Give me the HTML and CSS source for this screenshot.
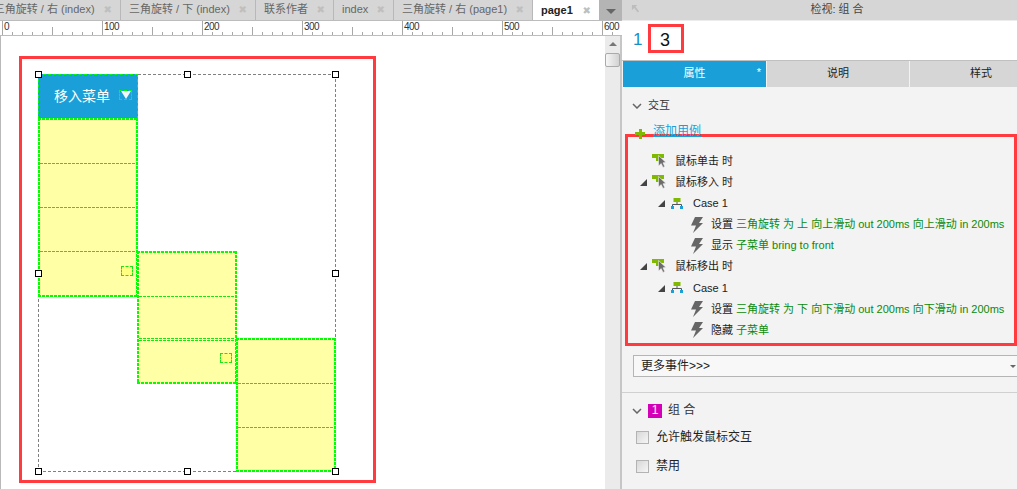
FILE: index.html
```html
<!DOCTYPE html>
<html lang="zh">
<head>
<meta charset="utf-8">
<title>page1</title>
<link rel="stylesheet" href="styles.css">
</head>
<body>
<svg class="defs" aria-hidden="true">
  <symbol id="ev" viewBox="0 0 16 14">
    <path d="M0 0h12v4H8v3H4V4H0z" fill="#7fba00"/>
    <path d="M6.500 1.500l7.500 7-3 .3 1.800 3.700-1.800.9-1.800-3.800-2.700 2.400z" fill="#6d6d6d" stroke="#f3f3f3" stroke-width=".6"/>
  </symbol>
  <symbol id="cs" viewBox="0 0 12 12">
    <rect x="2.500" y="0" width="7" height="4" fill="#7fba00"/>
    <path d="M6 4v2.500M1.500 8V6.500h9V8" fill="none" stroke="#555" stroke-width="1"/>
    <rect x="0" y="8" width="3" height="3" fill="#1a9fd8"/>
    <rect x="9" y="8" width="3" height="3" fill="#1a9fd8"/>
  </symbol>
  <symbol id="bolt" viewBox="0 0 12 16">
    <path d="M4 0h8L8 6h4L2 16l3-7.500H0z" fill="#666"/>
  </symbol>
  <symbol id="tri" viewBox="0 0 8 8">
    <path d="M8 0v8H0z" fill="#444"/>
  </symbol>
  <symbol id="chev" viewBox="0 0 10 6">
    <path d="M1 1l4 4 4-4" fill="none" stroke="#666" stroke-width="1.500"/>
  </symbol>
</svg>

<div class="app">
  <section class="left">
    <nav class="tabs">
      <div class="tab first">三角旋转 / 右 (index)<span class="x">✖</span></div>
      <div class="tab">三角旋转 / 下 (index)<span class="x">✖</span></div>
      <div class="tab">联系作者<span class="x">✖</span></div>
      <div class="tab">index<span class="x">✖</span></div>
      <div class="tab">三角旋转 / 右 (page1)<span class="x">✖</span></div>
      <div class="tab active">page1<span class="x">✖</span></div>
      <div class="tab-more"><span class="tab-arrow"></span></div>
    </nav>
    <div class="ruler">
      <span class="mark">0</span><span class="mark">100</span><span class="mark">200</span><span class="mark">300</span><span class="mark">400</span><span class="mark">500</span><span class="mark last">600</span>
    </div>
    <div class="work">
      <div class="canvas">
        <div class="selection"></div>
        <span class="h hx1 hy1"></span><span class="h hx2 hy1"></span><span class="h hx3 hy1"></span>
        <span class="h hx1 hy2"></span><span class="h hx3 hy2"></span>
        <span class="h hx1 hy3"></span><span class="h hx2 hy3"></span><span class="h hx3 hy3"></span>

        <div class="menu-btn">
          <span class="menu-label">移入菜单</span>
          <span class="menu-tri"><i></i></span>
        </div>
        <div class="stack s1">
          <div class="cell"></div><div class="cell"></div><div class="cell"></div>
          <div class="cell"><span class="mini"></span></div>
        </div>
        <div class="stack s2">
          <div class="cell"></div><div class="cell short"></div>
          <div class="cell dbl"><span class="mini"></span></div>
        </div>
        <div class="stack s3">
          <div class="cell"></div><div class="cell"></div><div class="cell"></div>
        </div>
        <div class="redbox"></div>
      </div>
      <div class="scrollbar">
        <span class="sb-up"></span>
        <span class="sb-thumb"></span>
      </div>
    </div>
  </section>

  <aside class="panel">
    <header class="p-head">
      <svg class="p-back" viewBox="0 0 10 10"><path d="M1 1h6L5 3l4 5-1.500 1.500-4-5L1 7z" fill="#bdbdbd"/></svg>
      <span>检视: 组 合</span>
    </header>
    <div class="p-pages">
      <span class="p-one">1</span>
      <span class="p-three">3</span>
    </div>
    <div class="p-tabs">
      <div class="p-tab on">属性<span class="star">*</span></div>
      <div class="p-tab mid">说明</div>
      <div class="p-tab end">样式</div>
    </div>
    <div class="p-body">
      <div class="sec-head first">
        <svg class="chev"><use href="#chev"/></svg>
        <span>交互</span>
      </div>
      <div class="add"><span class="plus"></span><a class="add-link">添加用例</a></div>
      <div class="events">
        <div class="row r-ev"><svg class="i-ev"><use href="#ev"/></svg><span class="dark">鼠标单击 时</span></div>
        <div class="row r-ev"><svg class="i-tri"><use href="#tri"/></svg><svg class="i-ev"><use href="#ev"/></svg><span class="dark">鼠标移入 时</span></div>
        <div class="row r-case"><svg class="i-tri"><use href="#tri"/></svg><svg class="i-cs"><use href="#cs"/></svg><span class="dark">Case 1</span></div>
        <div class="row r-act"><svg class="i-bolt"><use href="#bolt"/></svg><span class="dark">设置</span><span class="grn">三角旋转 为 上 向上滑动 out 200ms 向上滑动 in 200ms</span></div>
        <div class="row r-act"><svg class="i-bolt"><use href="#bolt"/></svg><span class="dark">显示</span><span class="grn">子菜单 bring to front</span></div>
        <div class="row r-ev"><svg class="i-tri"><use href="#tri"/></svg><svg class="i-ev"><use href="#ev"/></svg><span class="dark">鼠标移出 时</span></div>
        <div class="row r-case"><svg class="i-tri"><use href="#tri"/></svg><svg class="i-cs"><use href="#cs"/></svg><span class="dark">Case 1</span></div>
        <div class="row r-act"><svg class="i-bolt"><use href="#bolt"/></svg><span class="dark">设置</span><span class="grn">三角旋转 为 下 向下滑动 out 200ms 向下滑动 in 200ms</span></div>
        <div class="row r-act"><svg class="i-bolt"><use href="#bolt"/></svg><span class="dark">隐藏</span><span class="grn">子菜单</span></div>
      </div>
      <div class="select">更多事件&gt;&gt;&gt;<span class="sel-arrow"></span></div>
      <div class="divider"></div>
      <div class="sec-head group">
        <svg class="chev"><use href="#chev"/></svg>
        <span class="badge">1</span>
        <span>组 合</span>
      </div>
      <div class="checks">
        <label class="check"><span class="box"></span>允许触发鼠标交互</label>
        <label class="check"><span class="box"></span>禁用</label>
        <label class="check"><span class="box"></span></label>
      </div>
    </div>
  </aside>
</div>
</body>
</html>
```

FILE: styles.css
```css
* { box-sizing: border-box; }
html, body { margin: 0; height: 100%; overflow: hidden; }
body {
  background: #fff;
  color: #333;
  font: 12px/1.2 "Liberation Sans", "Noto Sans CJK SC", sans-serif;
}
.defs { position: absolute; width: 0; height: 0; }
.app { display: flex; width: 1017px; height: 489px; overflow: hidden; }

/* left column */
.left { width: 622px; flex: none; display: flex; flex-direction: column; }
.tabs {
  display: flex;
  height: 21px;
  background: #d6d6d6;
  border-bottom: 1px solid #bcbcbc;
  overflow: hidden;
  flex: none;
  font-size: 11px;
}
.tab {
  display: flex;
  align-items: center;
  justify-content: space-between;
  flex: none;
  height: 20px;
  padding: 0 8px;
  border-right: 1px solid #b8b8b8;
  color: #666;
  white-space: nowrap;
}
.tab:nth-child(1) { width: 121px; padding-left: 0; justify-content: flex-end; gap: 9px; }
.tab:nth-child(2) { width: 135px; }
.tab:nth-child(3) { width: 78px; }
.tab:nth-child(4) { width: 60px; }
.tab:nth-child(5) { width: 139px; }
.tab.active {
  width: 66px;
  height: 21px;
  background: #fff;
  border-right: 0;
  color: #222;
  font-weight: 700;
}
.x { color: #bfbfbf; font: 10px/1 "DejaVu Sans", sans-serif; }
.tab-more {
  display: flex;
  align-items: center;
  justify-content: center;
  width: 23px;
  background: #b4b4b4;
}
.tab-arrow {
  width: 0;
  height: 0;
  margin-top: 2px;
  border: 5px solid transparent;
  border-top: 5px solid #666;
  border-bottom: 0;
}

.ruler {
  display: flex;
  flex: none;
  height: 15px;
  padding-left: 2px;
  border-bottom: 1px solid #bcbcbc;
  background-color: #fff;
  background-image:
    repeating-linear-gradient(90deg, transparent 0 2px, #a8a8a8 2px 3px, transparent 3px 50px),
    repeating-linear-gradient(90deg, transparent 0 2px, #a8a8a8 2px 3px, transparent 3px 10px);
  background-size: 100% 8px, 100% 3px;
  background-position: 0 bottom, 0 bottom;
  background-repeat: no-repeat;
}
.mark {
  flex: none;
  width: 100px;
  height: 14px;
  padding-left: 1px;
  border-left: 1px solid #a8a8a8;
  color: #333;
  font-size: 10px;
  letter-spacing: -.5px;
  line-height: 11px;
}
.mark.last { width: 18px; }

.work { flex: 1; display: flex; min-height: 0; }
.canvas {
  position: relative;
  flex: 1;
  background: #fff;
  border-left: 1px solid #b9b9b9;
}

/* the canvas is a free surface: nodes sit at their coordinates */
.selection {
  position: absolute;
  left: 37px; top: 38px;
  width: 298px; height: 398px;
  --dh: repeating-linear-gradient(90deg, #808080 0 3px, transparent 3px 5px);
  --dv: repeating-linear-gradient(180deg, #808080 0 3px, transparent 3px 5px);
  background:
    var(--dh) 0 0 / 100% 1px no-repeat,
    var(--dh) 0 100% / 100% 1px no-repeat,
    var(--dv) 0 0 / 1px 100% no-repeat,
    var(--dv) 100% 0 / 1px 100% no-repeat;
}
.h {
  position: absolute;
  width: 7px; height: 7px;
  background: #fff;
  border: 1px solid #000;
  z-index: 3;
}
.hx1 { left: 34px; } .hx2 { left: 183px; } .hx3 { left: 331px; }
.hy1 { top: 35px; } .hy2 { top: 234px; } .hy3 { top: 432px; }

.menu-btn {
  position: absolute;
  left: 37px; top: 38px;
  width: 100px; height: 45px;
  display: flex;
  align-items: center;
  background: #1a9fd8;
  border: 1px dashed #0f0;
  color: #fff;
  font-size: 14px;
  padding: 0 0 0 15px;
}
.menu-tri {
  display: flex;
  justify-content: center;
  width: 13px; height: 10px;
  margin: -3px 0 0 9px;
  border: 1px dashed #0f0;
}
.menu-tri i {
  width: 0; height: 0;
  border-left: 5.500px solid transparent;
  border-right: 5.500px solid transparent;
  border-top: 8px solid #f2f7fb;
}
.stack {
  --gh: repeating-linear-gradient(90deg, #0f0 0 3px, transparent 3px 4px);
  --gv: repeating-linear-gradient(180deg, #0f0 0 3px, transparent 3px 4px);
  position: absolute;
  display: flex;
  flex-direction: column;
  width: 100px;
  padding: 2px;
  background:
    var(--gh) 0 0 / 100% 2px no-repeat,
    var(--gh) 0 100% / 100% 2px no-repeat,
    var(--gv) 0 0 / 2px 100% no-repeat,
    var(--gv) 100% 0 / 2px 100% no-repeat,
    #ffffa6;
}
.s1 { left: 37px; top: 82px; height: 179px; }
.s2 { left: 136px; top: 215px; height: 133px; }
.s3 { left: 235px; top: 302px; height: 134px; }
.cell {
  --line: repeating-linear-gradient(90deg, #19e619 0 3px, transparent 3px 4px);
  position: relative;
  flex: none;
  height: 44px;
  background: var(--line) 0 0 / 100% 1px no-repeat;
}
.cell:first-child { height: 43px; background: none; }
.cell:last-child { flex: 1; height: auto; }
.cell.short { height: 42px; }
.cell.dbl::before {
  content: "";
  display: block;
  height: 1px;
  margin-top: 2px;
  background: var(--line);
}
.mini {
  position: absolute;
  right: 3px; top: 15px;
  width: 12px; height: 10px;
  border: 1px dashed #19e619;
  background: #ffff80;
}
.redbox {
  position: absolute;
  left: 18px; top: 20px;
  width: 357px; height: 427px;
  border: 3px solid #ff3b3f;
  z-index: 4;
  pointer-events: none;
}
.scrollbar {
  flex: none;
  width: 17px;
  background: #ebebeb;
  border-right: 2px solid #c6c6c6;
  display: flex;
  flex-direction: column;
  align-items: center;
  padding-top: 6px;
}
.sb-up {
  width: 0; height: 0;
  border: 4px solid transparent;
  border-bottom: 4px solid #777;
  border-top: 0;
}
.sb-thumb {
  width: 15px; height: 14px;
  margin-top: 7px;
  border: 1px solid #aaa;
  border-radius: 2px;
  background: linear-gradient(90deg, #f6f6f6, #d2d2d2);
}

/* right panel: wider than the window, its right side is cut off */
.panel { flex: none; width: 430px; display: flex; flex-direction: column; background: #f3f3f3; font-size: 11px; }
.p-head {
  position: relative;
  display: flex;
  justify-content: center;
  align-items: center;
  height: 21px;
  flex: none;
  background: #d6d6d6;
  color: #444;
  border-bottom: 1px solid #ececec;
}
.p-back { position: absolute; left: 9px; top: 4px; width: 9px; height: 9px; }
.p-pages {
  display: flex;
  align-items: center;
  height: 40px;
  flex: none;
  background: #fff;
  border-bottom: 1px solid #c0c0c0;
  padding-left: 11px;
  font-size: 18px;
}
.p-one { color: #1a8ec2; width: 15px; font-size: 17px; }
.p-three {
  display: flex;
  align-items: center;
  width: 36px; height: 29px;
  margin-top: -4px;
  padding: 4px 0 0 9px;
  border: 3px solid #ff3b3f;
  color: #111;
}
.p-tabs { display: flex; height: 26px; flex: none; padding-left: 1px; }
.p-tab {
  position: relative;
  display: flex;
  align-items: center;
  justify-content: center;
  flex: none;
  background: #d6d6d6;
  color: #222;
}
.p-tab.on { width: 144px; background: #1a9fd8; color: #fff; border-right: 1px solid #f3f3f3; }
.p-tab.mid { width: 143px; border-right: 1px solid #f3f3f3; }
.p-tab.end { width: 142px; }
.star { position: absolute; right: 5px; top: 5px; font-size: 11px; }

.p-body { flex: 1; min-height: 0; overflow: hidden; }
.sec-head {
  display: flex;
  align-items: center;
  height: 36px;
  padding-left: 10px;
  gap: 6px;
  color: #333;
}
.sec-head.first { height: 37px; }
.chev { width: 10px; height: 6px; }
.add { display: flex; align-items: center; height: 13px; margin-top: 1px; padding-left: 13px; gap: 8px; font-size: 12px; }
.plus {
  width: 10px; height: 10px;
  margin-top: 4px;
  background:
    linear-gradient(#7fba00, #7fba00) 50% 50% / 10px 3px no-repeat,
    linear-gradient(#7fba00, #7fba00) 50% 50% / 3px 10px no-repeat;
}
.add-link { color: #1a9fd8; text-decoration: underline; }
.events {
  margin: -4px 0 0 3px;
  width: 392px;
  height: 212px;
  padding-top: 14px;
  border: 3px solid #ff3b3f;
}
.row { display: flex; align-items: center; height: 21.100px; white-space: pre; position: relative; }
.r-ev { padding-left: 24px; }
.r-case { padding-left: 43px; }
.r-act { padding-left: 63px; }
.i-ev { width: 16px; height: 14px; flex: none; margin: -2px 7px 0 0; }
.i-cs { width: 12px; height: 12px; flex: none; margin-right: 10px; }
.i-bolt { width: 12px; height: 16px; flex: none; margin-right: 8px; }
.i-tri { position: absolute; width: 7px; height: 7px; top: 7px; }
.r-ev .i-tri { left: 12px; }
.r-case .i-tri { left: 30px; }
.dark { color: #222; }
.grn { color: #0a8a0a; margin-left: 3px; }
.select {
  position: relative;
  display: flex;
  align-items: center;
  width: 390px;
  height: 22px;
  margin: 9px 0 0 11px;
  padding-left: 7px;
  background: #f8f8f8;
  border: 1px solid #b5b5b5;
  color: #222;
  font-size: 12px;
}
.sel-arrow {
  position: absolute;
  right: 6px; top: 9px;
  border: 3px solid transparent;
  border-top: 3px solid #666;
  border-bottom: 0;
}
.divider { height: 1px; margin-top: 15px; background: #d0d0d0; }
.sec-head.group { height: 35px; font-size: 12px; }
.badge {
  display: flex;
  align-items: center;
  justify-content: center;
  width: 14px; height: 14px;
  background: #d400b8;
  color: #fff;
}
.checks { margin-top: -5px; }
.check {
  display: flex;
  align-items: center;
  gap: 7px;
  height: 29px;
  padding-left: 14px;
  color: #222;
  font-size: 12px;
}
.check .box {
  width: 13px; height: 13px;
  border: 1px solid #b3b3b3;
  background: linear-gradient(135deg, #d8d8d8, #f6f6f6);
}
```
